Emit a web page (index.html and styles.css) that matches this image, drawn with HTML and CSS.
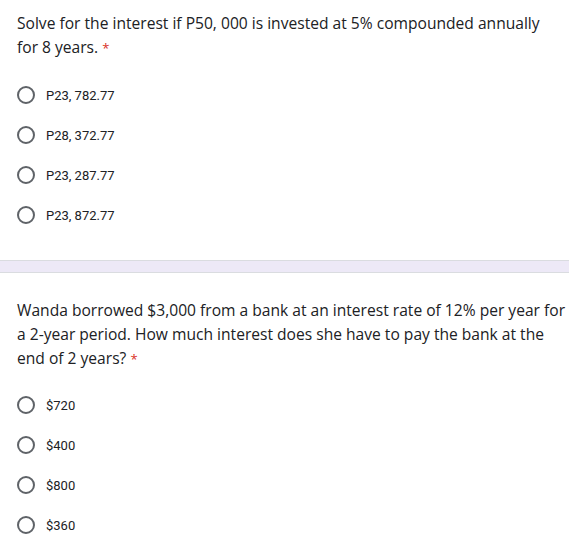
FILE: index.html
```html
<!DOCTYPE html>
<html>
<head>
<meta charset="utf-8">
<link rel="stylesheet" href="styles.css">
</head>
<body>
<div class="card card-first">
  <div class="title">Solve for the interest if P50, 000 is invested at 5% compounded annually for 8 years. <span class="req">*</span></div>
  <div class="options">
    <label class="opt"><span class="radio"></span><span class="label">P23, 782.77</span></label>
    <label class="opt"><span class="radio"></span><span class="label">P28, 372.77</span></label>
    <label class="opt"><span class="radio"></span><span class="label">P23, 287.77</span></label>
    <label class="opt"><span class="radio"></span><span class="label">P23, 872.77</span></label>
  </div>
</div>
<div class="band"></div>
<div class="card card-second">
  <div class="title">Wanda borrowed $3,000 from a bank at an interest rate of 12% per year for a 2-year period. How much interest does she have to pay the bank at the end of 2 years? <span class="req">*</span></div>
  <div class="options">
    <label class="opt"><span class="radio"></span><span class="label">$720</span></label>
    <label class="opt"><span class="radio"></span><span class="label">$400</span></label>
    <label class="opt"><span class="radio"></span><span class="label">$800</span></label>
    <label class="opt"><span class="radio"></span><span class="label">$360</span></label>
  </div>
</div>
</body>
</html>
```
FILE: styles.css
```css
html, body {
  margin: 0;
  padding: 0;
  background: #ffffff;
}
body {
  width: 569px;
  height: 560px;
  overflow: hidden;
}
.card {
  padding: 0 0 0 17px;
}
.card-first {
  padding-top: 11px;
  padding-bottom: 25px;
}
.card-first .title {
  max-width: 535px;
}
.card-second {
  padding-top: 25px;
}
.title {
  font-family: "Open Sans", "Liberation Sans", sans-serif;
  font-size: 15.6px;
  line-height: 24px;
  color: #202124;
}
.req {
  color: #d93025;
  font-size: 13px;
  line-height: 1;
}
.options {
  display: flex;
  flex-direction: column;
  margin-top: 16px;
}
.card-second .options {
  margin-top: 15px;
}
.opt {
  display: flex;
  align-items: center;
  height: 40px;
}
.radio {
  box-sizing: border-box;
  width: 18px;
  height: 18px;
  border: 2px solid #5f6368;
  border-radius: 50%;
  flex: none;
}
.label {
  font-family: Roboto, "Liberation Sans", sans-serif;
  font-size: 13px;
  color: #202124;
  margin-left: 11px;
}
.band {
  height: 11px;
  background: #ede9f7;
  border-top: 1px solid #dadce0;
  border-bottom: 1px solid #dadce0;
}
```
